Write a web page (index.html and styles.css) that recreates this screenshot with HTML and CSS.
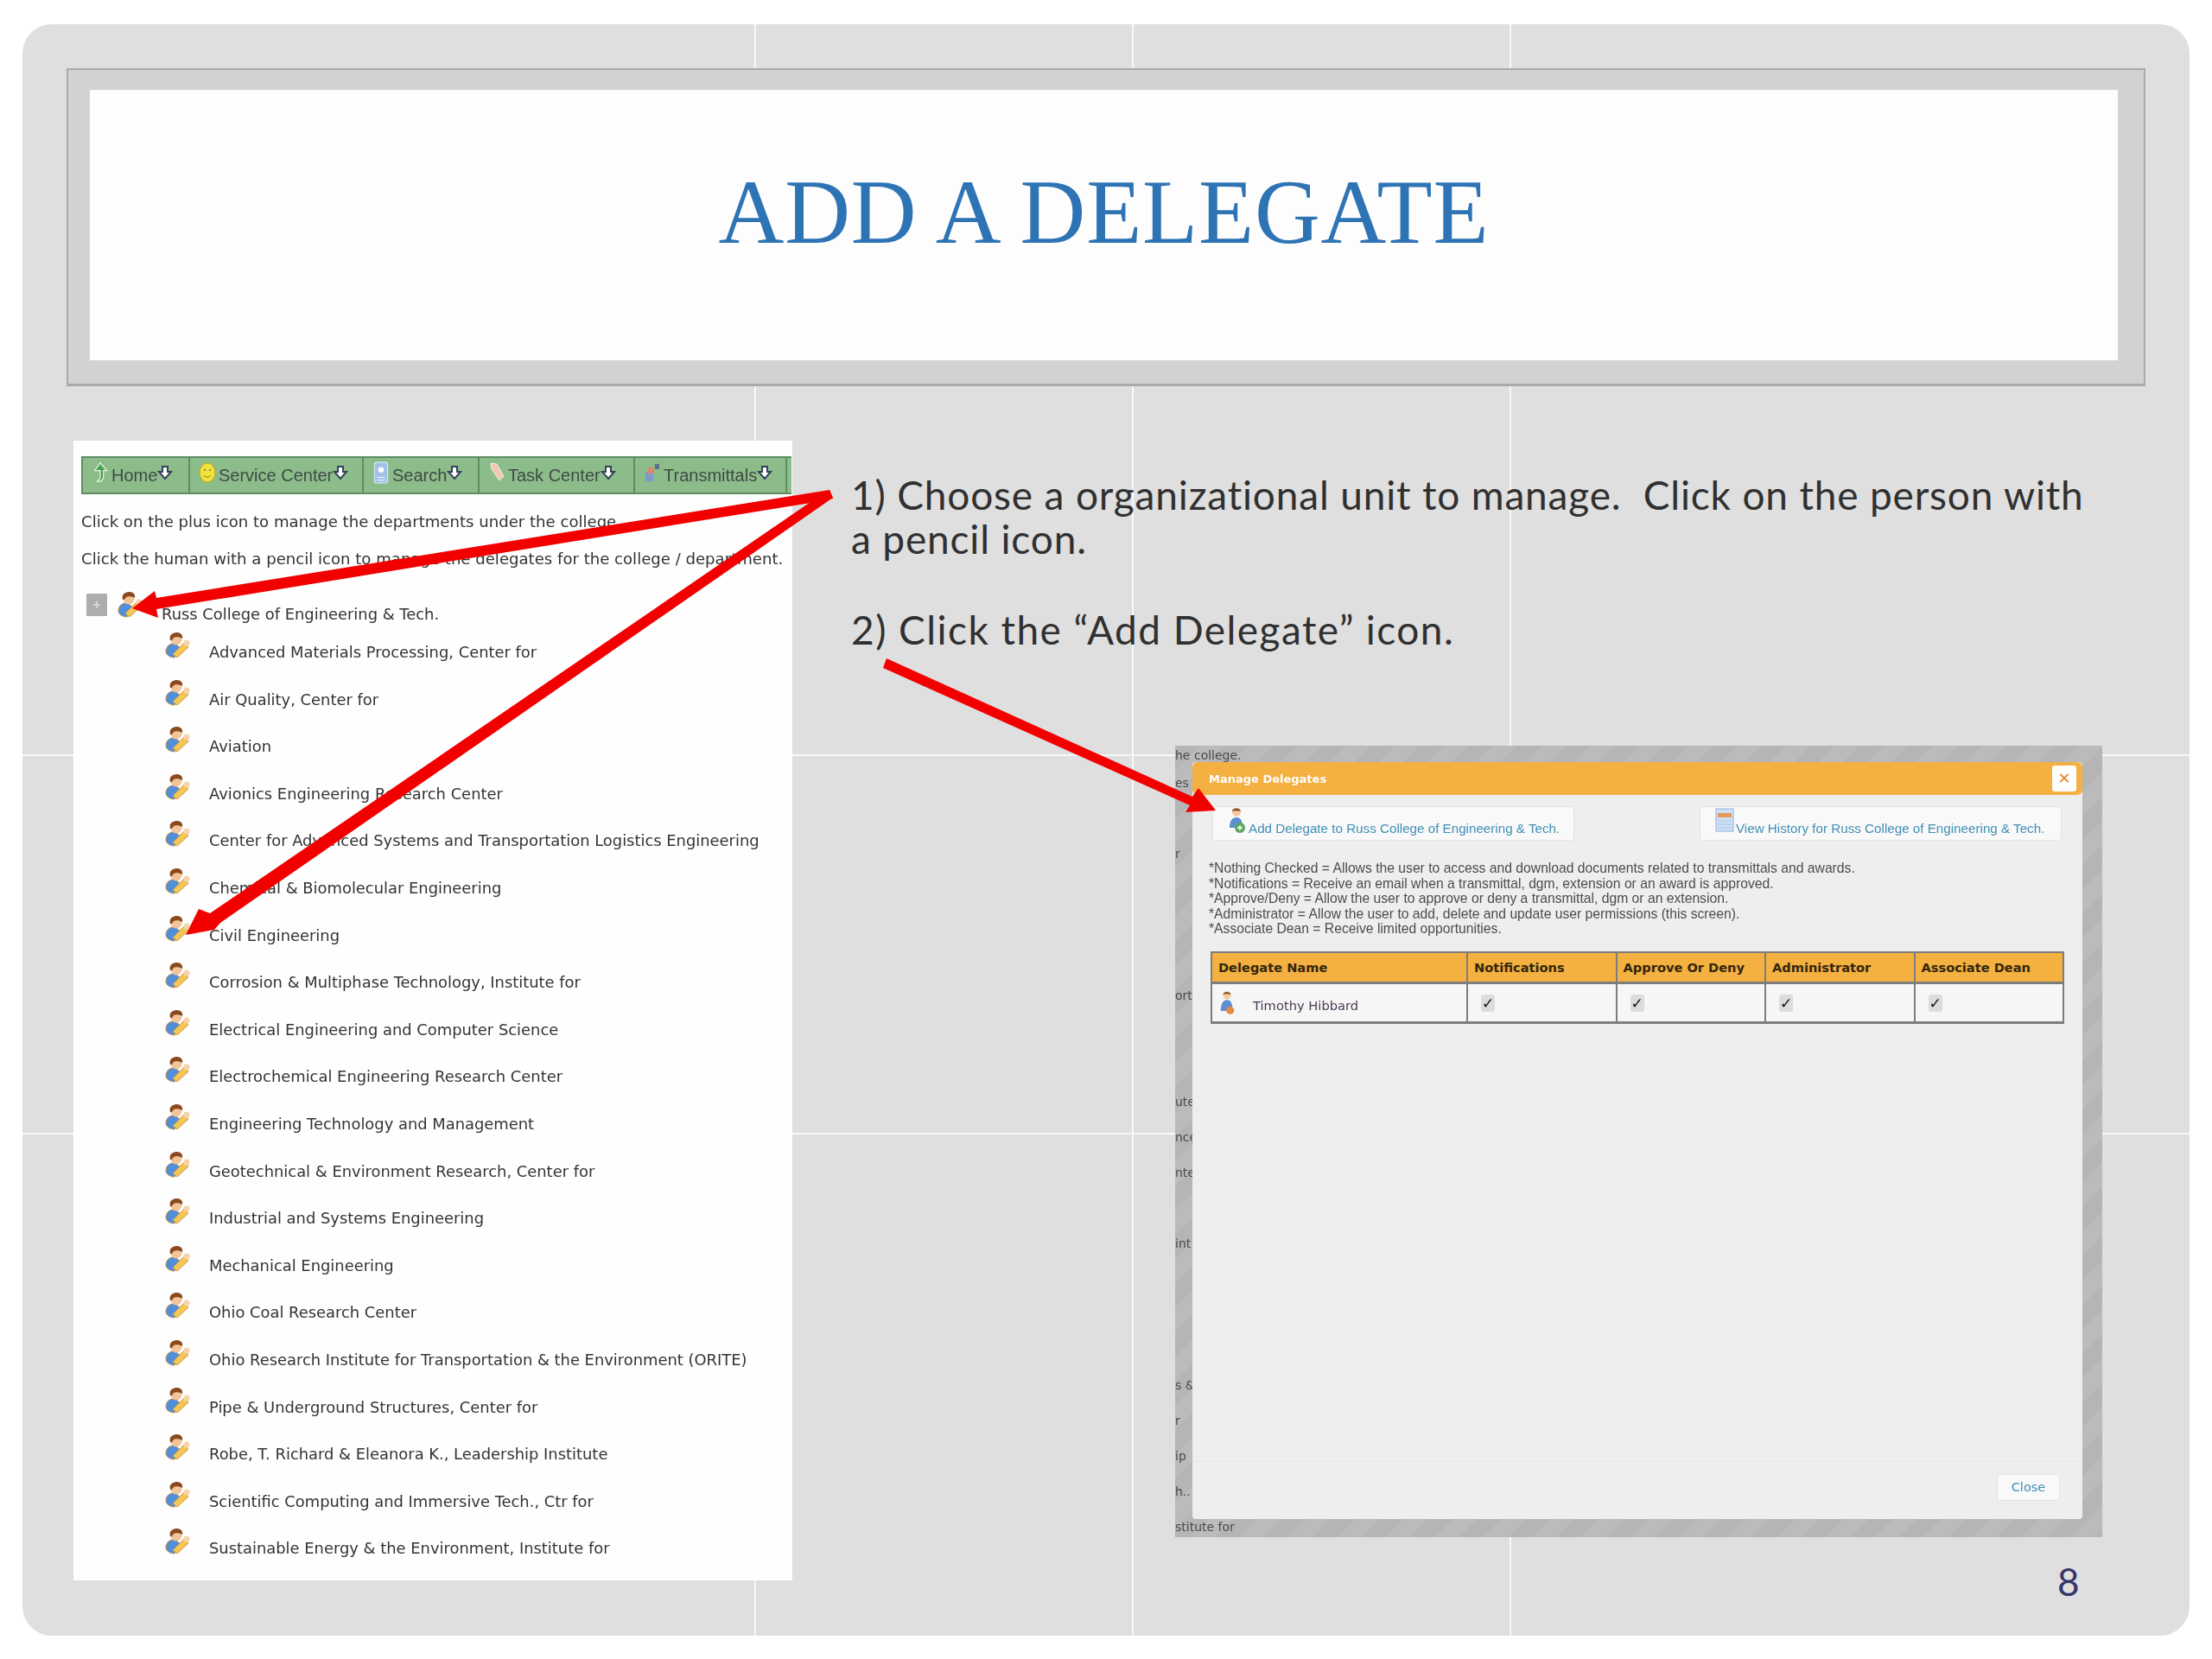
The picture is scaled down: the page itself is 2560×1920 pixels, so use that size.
FILE: index.html
```html
<!DOCTYPE html>
<html lang="en">
<head>
<meta charset="utf-8">
<title>Add a Delegate</title>
<link rel="stylesheet" href="styles.css">
</head>
<body>
<svg class="defs" width="0" height="0" aria-hidden="true">
  <defs>
    <symbol id="person" viewBox="0 0 30 30">
      <path d="M1 22c0-6 5-10 11-9l7 6-8 10c-5 0-10-3-10-7z" fill="#4f8fdc" stroke="#c98a3a" stroke-width="1"/>
      <path d="M9 25L22 12l5 5-13 12z" fill="#f2c657" stroke="#d49a3a" stroke-width="1"/>
      <circle cx="25" cy="12" r="3.500" fill="#f6d3a8"/>
      <circle cx="13" cy="8" r="6.500" fill="#f2c49a"/>
      <path d="M6 9C4 2 10 0 14 0c4 0 7 3 6 7-3-2-8-2-10-1-1 2-3 4-4 3z" fill="#8a4a1e"/>
    </symbol>
    <symbol id="down" viewBox="0 0 18 18">
      <path d="M6 2h6v6h4l-7 8-7-8h4z" fill="#fff" stroke="#33415c" stroke-width="2"/>
    </symbol>
  </defs>
</svg>

<main class="slide">
  <header class="title-frame">
    <div class="title-inner"><h1 class="title">ADD A DELEGATE</h1></div>
  </header>

  <div class="content">
    <section class="shot-list">
      <nav class="menu">
        <div class="menu-item menu-home">
          <svg class="menu-icon" viewBox="0 0 16 20"><path d="M8 1l6 7h-3v6c0 3-3 5-6 4 2-1 3-2 3-4V8H3z" fill="#4fa04f" stroke="#e8f4e8"/></svg>
          <span>Home</span><svg class="arrow-down"><use href="#down"/></svg>
        </div>
        <div class="menu-item menu-service">
          <svg class="menu-icon" viewBox="0 0 20 24"><ellipse cx="10" cy="12" rx="9" ry="11" fill="#f2e23c" stroke="#b8a820"/><circle cx="7" cy="9" r="1" fill="#665"/><circle cx="13" cy="9" r="1" fill="#665"/><path d="M6 15c2 3 6 3 8 0" stroke="#887a10" fill="none"/></svg>
          <span>Service Center</span><svg class="arrow-down"><use href="#down"/></svg>
        </div>
        <div class="menu-item menu-search">
          <svg class="menu-icon" viewBox="0 0 16 24"><rect x="1" y="1" width="14" height="22" rx="2" fill="#9fc1ea" stroke="#dfe9f7"/><circle cx="8" cy="9" r="3" fill="#fff"/><path d="M4 17h8M4 20h8" stroke="#fff"/></svg>
          <span>Search</span><svg class="arrow-down"><use href="#down"/></svg>
        </div>
        <div class="menu-item menu-task">
          <svg class="menu-icon" viewBox="0 0 20 24"><path d="M3 1l7 1 8 14-5 5L4 8z" fill="#f2c8b0" stroke="#eee"/></svg>
          <span>Task Center</span><svg class="arrow-down"><use href="#down"/></svg>
        </div>
        <div class="menu-item menu-trans">
          <svg class="menu-icon" viewBox="0 0 20 24"><rect x="2" y="11" width="9" height="11" fill="#7d9bc8"/><rect x="5" y="6" width="7" height="7" fill="#d88a6a"/><rect x="13" y="2" width="5" height="6" fill="#5c6f8f"/></svg>
          <span>Transmittals</span><svg class="arrow-down"><use href="#down"/></svg>
        </div>
      </nav>

      <p class="hint">Click on the plus icon to manage the departments under the college.</p>
      <p class="hint">Click the human with a pencil icon to manage the delegates for the college / department.</p>

      <div class="tree-root">
        <span class="plus">+</span>
        <svg class="person person-root"><use href="#person"/></svg>
        <span class="root-label">Russ College of Engineering &amp; Tech.</span>
      </div>

      <ul class="tree">
        <li><svg class="person"><use href="#person"/></svg><span>Advanced Materials Processing, Center for</span></li>
        <li><svg class="person"><use href="#person"/></svg><span>Air Quality, Center for</span></li>
        <li><svg class="person"><use href="#person"/></svg><span>Aviation</span></li>
        <li><svg class="person"><use href="#person"/></svg><span>Avionics Engineering Research Center</span></li>
        <li><svg class="person"><use href="#person"/></svg><span>Center for Advanced Systems and Transportation Logistics Engineering</span></li>
        <li><svg class="person"><use href="#person"/></svg><span>Chemical &amp; Biomolecular Engineering</span></li>
        <li><svg class="person"><use href="#person"/></svg><span>Civil Engineering</span></li>
        <li><svg class="person"><use href="#person"/></svg><span>Corrosion &amp; Multiphase Technology, Institute for</span></li>
        <li><svg class="person"><use href="#person"/></svg><span>Electrical Engineering and Computer Science</span></li>
        <li><svg class="person"><use href="#person"/></svg><span>Electrochemical Engineering Research Center</span></li>
        <li><svg class="person"><use href="#person"/></svg><span>Engineering Technology and Management</span></li>
        <li><svg class="person"><use href="#person"/></svg><span>Geotechnical &amp; Environment Research, Center for</span></li>
        <li><svg class="person"><use href="#person"/></svg><span>Industrial and Systems Engineering</span></li>
        <li><svg class="person"><use href="#person"/></svg><span>Mechanical Engineering</span></li>
        <li><svg class="person"><use href="#person"/></svg><span>Ohio Coal Research Center</span></li>
        <li><svg class="person"><use href="#person"/></svg><span>Ohio Research Institute for Transportation &amp; the Environment (ORITE)</span></li>
        <li><svg class="person"><use href="#person"/></svg><span>Pipe &amp; Underground Structures, Center for</span></li>
        <li><svg class="person"><use href="#person"/></svg><span>Robe, T. Richard &amp; Eleanora K., Leadership Institute</span></li>
        <li><svg class="person"><use href="#person"/></svg><span>Scientific Computing and Immersive Tech., Ctr for</span></li>
        <li><svg class="person"><use href="#person"/></svg><span>Sustainable Energy &amp; the Environment, Institute for</span></li>
      </ul>
    </section>

    <section class="side">
      <p class="step">1) Choose a organizational unit to manage.&nbsp; Click on the person with a pencil icon.</p>
      <p class="step step-two">2) Click the “Add Delegate” icon.</p>

      <div class="overlay">
        <ul class="behind">
          <li>he college.</li>
          <li>es</li><li></li><li>r</li><li></li><li></li><li></li><li>ort</li><li></li><li></li>
          <li>ute</li><li>nce</li><li>nte</li><li></li><li>int</li><li></li><li></li><li></li>
          <li>s &amp;</li><li>r</li><li>ip</li><li>h..</li><li>stitute for</li>
        </ul>
        <div class="dialog">
          <div class="dialog-head">
            <span>Manage Delegates</span>
            <span class="dialog-x">✕</span>
          </div>
          <div class="dialog-actions">
            <a class="action-btn">
              <svg class="person-small" viewBox="0 0 22 32"><circle cx="10" cy="6" r="5" fill="#f2c9a0"/><path d="M5 5c0-4 9-5 10 0-3-1-7-1-10 0z" fill="#8a4f22"/><path d="M2 24c0-8 3-12 8-12s7 4 7 12z" fill="#5b8fd0"/><circle cx="14" cy="24" r="6" fill="#5aa860"/><path d="M11 24h6M14 21v6" stroke="#fff" stroke-width="1.500"/></svg>
              <span>Add Delegate to Russ College of Engineering &amp; Tech.</span>
            </a>
            <a class="action-btn">
              <svg class="calendar" viewBox="0 0 22 28"><rect x="1" y="1" width="20" height="26" fill="#cfe0f5" stroke="#8fb0dc"/><rect x="3" y="6" width="16" height="5" fill="#e59a5a"/><path d="M3 15h16M3 19h16M3 23h16" stroke="#a9c4e6"/></svg>
              <span>View History for Russ College of Engineering &amp; Tech.</span>
            </a>
          </div>
          <div class="legend">
            <p>*Nothing Checked = Allows the user to access and download documents related to transmittals and awards.</p>
            <p>*Notifications = Receive an email when a transmittal, dgm, extension or an award is approved.</p>
            <p>*Approve/Deny = Allow the user to approve or deny a transmittal, dgm or an extension.</p>
            <p>*Administrator = Allow the user to add, delete and update user permissions (this screen).</p>
            <p>*Associate Dean = Receive limited opportunities.</p>
          </div>
          <table class="delegates">
            <thead>
              <tr><th>Delegate Name</th><th>Notifications</th><th>Approve Or Deny</th><th>Administrator</th><th>Associate Dean</th></tr>
            </thead>
            <tbody>
              <tr>
                <td class="name-cell"><svg class="person-tiny" viewBox="0 0 22 32"><circle cx="10" cy="6" r="5" fill="#f2c9a0"/><path d="M5 5c0-4 9-5 10 0-3-1-7-1-10 0z" fill="#8a4f22"/><path d="M2 26c0-9 3-14 8-14s7 5 7 14z" fill="#5b8fd0"/><circle cx="14" cy="25" r="5" fill="#e58a3a"/></svg><span>Timothy Hibbard</span></td>
                <td><span class="check">✓</span></td>
                <td><span class="check">✓</span></td>
                <td><span class="check">✓</span></td>
                <td><span class="check">✓</span></td>
              </tr>
            </tbody>
          </table>
          <div class="dialog-foot"><a class="close-btn">Close</a></div>
        </div>
      </div>
      <div class="page-num">8</div>
    </section>
  </div>

  <svg class="arrows" viewBox="0 0 2560 1920" aria-hidden="true">
    <polygon points="960,567 181,692 179,684 153,704 183,715 181,705 938,582 964,577" />
    <polygon points="938,581 243,1057 230,1052 215,1082 248,1076 255,1068 964,576 960,567" />
    <polygon points="1026,762 1380,922 1387,912 1407,938 1372,940 1377,932 1022,773" />
  </svg>
</main>
</body>
</html>
```
FILE: styles.css
```css
* { box-sizing: border-box; }
html, body { margin: 0; padding: 0; background: #fff; }
body { width: 2560px; height: 1920px; padding: 28px 26px 27px; position: relative; font-family: "DejaVu Sans", sans-serif; }
.defs { display: block; height: 0; }
p, h1, ul { margin: 0; padding: 0; }
ul { list-style: none; }

.slide {
  height: 1865px;
  border-radius: 34px;
  padding: 51px 51px 0;
  background-color: #dfdfdf;
  background-image:
    linear-gradient(#f8f8f8, #f8f8f8), linear-gradient(#f8f8f8, #f8f8f8), linear-gradient(#f8f8f8, #f8f8f8),
    linear-gradient(#f8f8f8, #f8f8f8), linear-gradient(#f8f8f8, #f8f8f8);
  background-repeat: no-repeat;
  background-size: 2px 100%, 2px 100%, 2px 100%, 100% 2px, 100% 2px;
  background-position: 847px 0, 1284px 0, 1721px 0, 0 845px, 0 1283px;
}

.title-frame {
  width: 2406px;
  height: 368px;
  padding: 23px 30px 27px 25px;
  background: #d2d2d2;
  border: 2px solid #a9a9a9;
  border-width: 2px 2px 3px 2px;
}
.title-inner { height: 100%; background: #fdfdfd; display: flex; justify-content: center; padding-top: 77px; }
.title { font: 400 105px/130px "Liberation Serif", serif; letter-spacing: .8px; color: #2e74b5; }

.content { display: flex; align-items: flex-start; margin-top: 63px; padding-left: 8px; }

.shot-list {
  width: 832px;
  height: 1319px;
  flex: none;
  padding: 18px 1px 0 9px;
  background: #fefefe;
  color: #333;
  font-size: 17.9px;
}
.menu {
  display: flex;
  height: 44px;
  background: #8dbc8b;
  border: solid #5f8d62;
  border-width: 2px 0 2px 2px;
  color: #3f4b45;
  font: 20px/40px "Liberation Sans", sans-serif;
}
.menu-item { display: flex; align-items: center; border-right: 2px solid #5f8d62; padding-left: 10px; filter: blur(.5px); }
.menu-home { width: 124px; }
.menu-service { width: 201px; }
.menu-search { width: 134px; }
.menu-task { width: 180px; }
.menu-trans { width: 176px; }
.menu-icon { width: 20px; height: 26px; margin: -6px 3px 0 0; flex: none; }
.arrow-down { width: 18px; height: 18px; margin: -6px 0 0 0; flex: none; }

.hint { margin-top: 16px; height: 32px; line-height: 32px; font-size: 18.1px; filter: blur(.4px); white-space: nowrap; }
.hint + .hint { margin-top: 11px; }

.tree-root { display: flex; align-items: flex-start; margin: 22px 0 0 6px; height: 47px; }
.plus { width: 24px; height: 26px; margin-top: 2px; background: #adadad; color: #d8d8d8; text-align: center; font: 700 16px/26px "Liberation Sans", sans-serif; border-radius: 1px; }
.person { width: 30px; height: 30px; flex: none; filter: blur(.4px); }
.person-root { margin-left: 12px; }
.root-label { margin: 14px 0 0 21px; line-height: 24px; filter: blur(.4px); }

.tree { padding-left: 97px; }
.tree li { display: flex; height: 54.6px; align-items: flex-start; white-space: nowrap; }
.tree li span { margin: 11px 0 0 21px; line-height: 24px; filter: blur(.4px); }

.side { flex: 1; margin-left: 68px; padding-top: 37px; color: #303030; }
.step { width: 1460px; font: 46px/51px "Lato", sans-serif; letter-spacing: .83px; }
.step-two { margin-top: 54px; letter-spacing: 1.45px; }

.overlay {
  position: relative;
  width: 1073px;
  height: 916px;
  margin: 109px 0 0 375px;
  background: repeating-linear-gradient(135deg, #b5b5b5 0 20px, #bbbbbb 20px 40px);
  overflow: hidden;
}
.behind { font-size: 14px; color: #4a4a4a; padding-top: 0; filter: blur(.4px); }
.behind li { height: 41px; line-height: 22px; white-space: nowrap; }
.behind li:first-child { height: 32px; }

.dialog {
  position: absolute;
  left: 20px;
  top: 19px;
  width: 1030px;
  height: 876px;
  background: #eeeeee;
  border-radius: 4px;
  display: flex;
  flex-direction: column;
}
.dialog-head {
  height: 38px;
  flex: none;
  background: #f4b040;
  border-radius: 6px;
  display: flex;
  align-items: center;
  justify-content: space-between;
  padding: 0 7px 0 19px;
  color: #fff;
  font: 700 13px "DejaVu Sans", sans-serif;
}
.dialog-head > span:first-child { filter: blur(.5px); }
.dialog-x { width: 28px; height: 30px; background: #fff; color: #e8882a; border-radius: 3px; text-align: center; line-height: 30px; font-size: 18px; }

.dialog-actions { display: flex; justify-content: space-between; padding: 13px 24px 0 23px; }
.action-btn {
  width: 419px;
  height: 40px;
  background: #f9f9f9;
  border: 1px solid #e2e2e2;
  border-radius: 3px;
  display: flex;
  align-items: flex-end;
  padding: 0 0 3px 17px;
  color: #3f8fb5;
  font: 15.2px/20px "Liberation Sans", sans-serif;
  white-space: nowrap;
  filter: blur(.4px);
}
.person-small { width: 22px; height: 32px; flex: none; margin: 0 2px 3px 0; }
.calendar { width: 22px; height: 28px; flex: none; margin: 0 2px 6px 0; }

.legend { margin: 23px 0 0 19px; font: 15.7px/17.5px "Liberation Sans", sans-serif; color: #4c4c4c; filter: blur(.4px); }

.delegates {
  margin: 17px 0 0 21px;
  width: 988px;
  border-collapse: collapse;
  table-layout: fixed;
  filter: blur(.3px);
}
.delegates th {
  height: 36px;
  padding: 0 0 0 7px;
  background: #f4b040;
  border: 2px solid #7d7d7d;
  color: #33260c;
  font: 700 14.6px "DejaVu Sans", sans-serif;
  text-align: left;
  white-space: nowrap;
}
.delegates th:first-child { width: 296px; }
.delegates td {
  height: 46px;
  padding: 0 0 0 15px;
  background: #f6f6f6;
  border: 2px solid #7d7d7d;
  border-top-width: 3px;
  border-bottom-width: 3px;
}
.delegates .name-cell { padding-left: 8px; }
.name-cell { color: #4a3b55; font-size: 14.7px; white-space: nowrap; }
.name-cell span { margin-left: 19px; position: relative; top: 4px; }
.person-tiny { width: 20px; height: 30px; vertical-align: middle; }
.check { display: inline-block; width: 16px; height: 20px; background: #dcdcdc; border-radius: 3px; color: #111; font: 700 17px/20px "DejaVu Sans", sans-serif; text-align: center; margin-top: 0; vertical-align: top; }

.dialog-foot {
  margin: auto 0 0;
  height: 67px;
  border-top: 1px solid #e6e6e6;
  display: flex;
  justify-content: flex-end;
  padding: 14px 26px 0 0;
}
.close-btn {
  width: 73px;
  height: 31px;
  background: #f9f9f9;
  border: 1px solid #e2e2e2;
  border-radius: 3px;
  color: #3f8fb5;
  font: 14.5px/29px "DejaVu Sans", sans-serif;
  text-align: center;
  filter: blur(.3px);
}

.page-num { margin: 24px 0 0 1396px; font: 44px/54px "Lato", sans-serif; color: #35356a; }

.arrows { position: absolute; left: 0; top: 0; width: 2560px; height: 1920px; fill: #f20000; pointer-events: none; }
```
